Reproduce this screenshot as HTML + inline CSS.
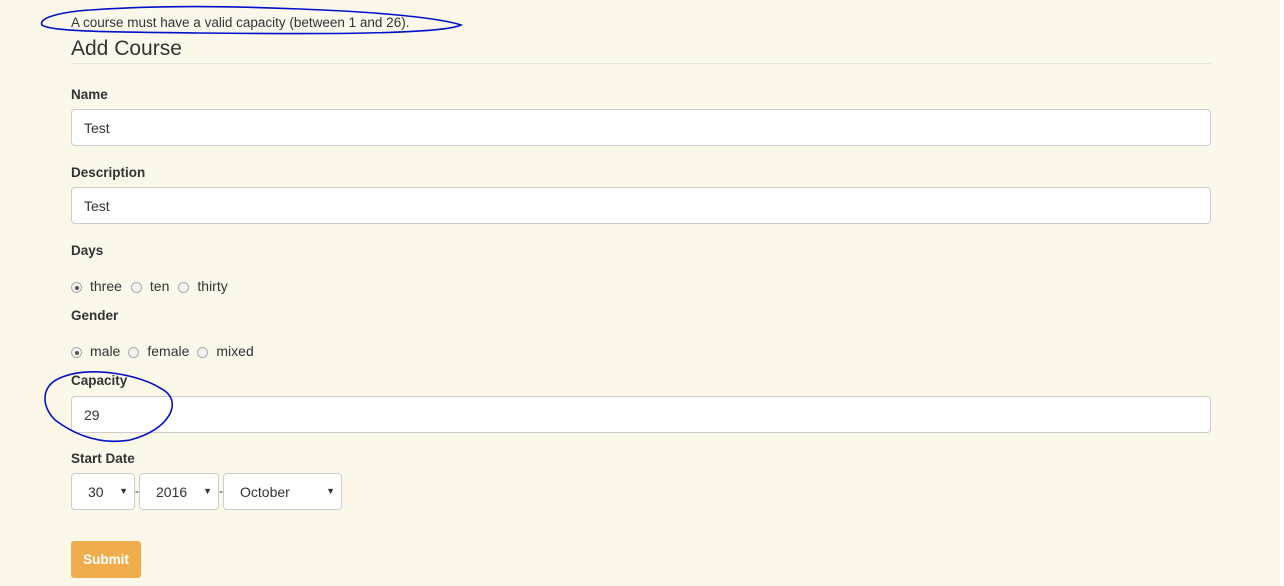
<!DOCTYPE html>
<html><head><style>
body{margin:0;width:1284px;height:586px;overflow:hidden;background:#fbf8ea;font-family:"Liberation Sans",sans-serif;color:#333;position:relative}
.a{position:absolute}
.lbl{font-weight:bold;font-size:13.5px;color:#333}
.inp{position:absolute;left:71px;width:1140px;height:37px;border:1px solid #ccc;border-radius:4px;background:#fff;font-size:14px;box-sizing:border-box;padding:10px 12px}
.rad{display:inline-block;width:11px;height:11px;border:1px solid #aaa;border-radius:50%;background:#f3f3f3;vertical-align:-2px;margin-right:8px;box-sizing:border-box;position:relative}
.rad.on::after{content:"";position:absolute;left:2.5px;top:2.5px;width:4px;height:4px;border-radius:50%;background:#555}
.row{font-size:14px;color:#333}
.row span.t{margin-right:8px}
.sel{position:absolute;top:473px;height:37px;border:1px solid #ccc;border-radius:4px;background:#fff;box-sizing:border-box;font-size:14px;padding:10px 0 0 16px}
.sel i{position:absolute;right:6px;top:12px;font-style:normal;font-size:9px}
</style></head><body>
<div class="a" style="left:71px;top:15px;font-size:13.5px">A course must have a valid capacity (between 1 and 26).</div>
<div class="a" style="left:71px;top:37px;font-size:21px">Add Course</div>
<div class="a" style="left:71px;top:63px;width:1140px;border-top:1px solid #e5e2d6"></div>
<div class="a lbl" style="left:71px;top:87px">Name</div>
<div class="inp" style="top:109px">Test</div>
<div class="a lbl" style="left:71px;top:165px">Description</div>
<div class="inp" style="top:187px">Test</div>
<div class="a lbl" style="left:71px;top:243px">Days</div>
<div class="a row" style="left:71px;top:278px"><span class="rad on"></span><span class="t" style="margin-right:9px">three</span><span class="rad"></span><span class="t" style="margin-right:9px">ten</span><span class="rad"></span><span class="t">thirty</span></div>
<div class="a lbl" style="left:71px;top:308px">Gender</div>
<div class="a row" style="left:71px;top:343px"><span class="rad on"></span><span class="t">male</span><span class="rad"></span><span class="t">female</span><span class="rad"></span><span class="t">mixed</span></div>
<div class="a lbl" style="left:71px;top:373px">Capacity</div>
<div class="inp" style="top:396px">29</div>
<div class="a lbl" style="left:71px;top:451px">Start Date</div>
<div class="sel" style="left:71px;width:64px">30<i>▼</i></div>
<div class="a" style="left:135px;top:484px;font-size:12px">-</div>
<div class="sel" style="left:139px;width:80px">2016<i>▼</i></div>
<div class="a" style="left:219px;top:484px;font-size:12px">-</div>
<div class="sel" style="left:223px;width:119px">October<i>▼</i></div>
<div class="a" style="left:71px;top:541px;width:70px;height:37px;background:#f0ad4e;border-radius:3px;color:#fff;font-weight:bold;font-size:13.5px;text-align:center;line-height:37px">Submit</div>
<div class="a" style="left:1280px;top:0;width:4px;height:586px;background:#fff"></div>
<svg class="a" style="left:0;top:0" width="1284" height="586">
<path d="M90 10 C160 5,230 6,300 9 C380 12,440 18,461 25 C440 35,300 34,200 33 C120 32,50 32,42 25 C38 18,60 12,90 10" fill="none" stroke="#0012c8" stroke-width="1.6"/>
<path d="M60 378 C90 365,140 375,160 388 C185 400,170 430,130 440 C100 445,75 435,55 420 C40 405,42 385,60 378" fill="none" stroke="#0012c8" stroke-width="1.6"/>
</svg>
</body></html>
